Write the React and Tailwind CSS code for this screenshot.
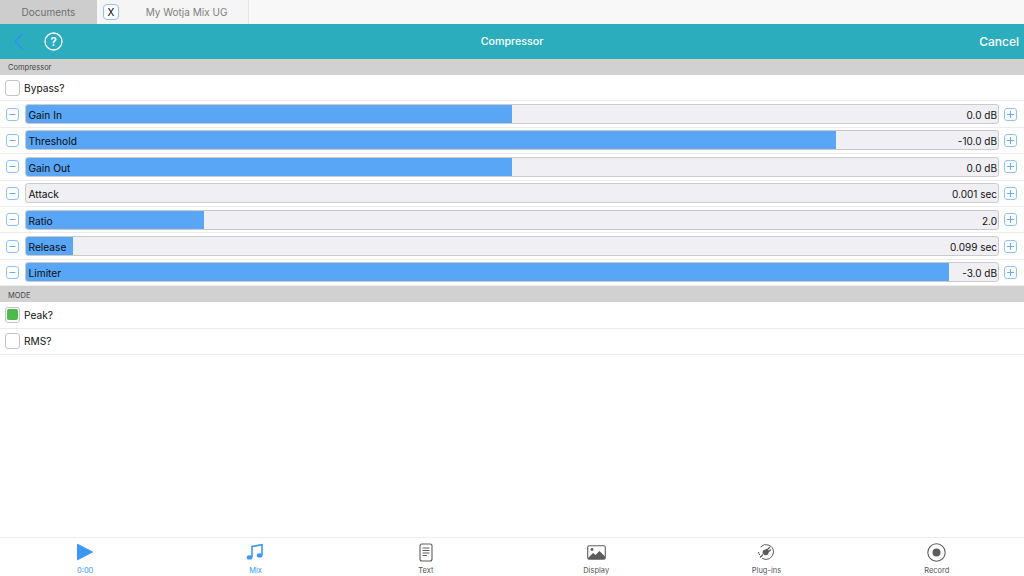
import React from "react";

function Check({ label, on }) {
  return (
    <div className="flex h-[26.4px] items-center border-b border-[#ececec] pl-[5px]">
      <div className="flex h-[16px] w-[15px] items-center justify-center rounded-[3px] border-[1.5px] border-[#c4c4c4] bg-white">
        {on && <div className="h-[11px] w-[11px] rounded-[2px] bg-[#4cbb4c]" />}
      </div>
      <span className="ml-[4px] pt-[1.5px] text-[10.2px] text-[#111]">{label}</span>
    </div>
  );
}

function Step({ plus }) {
  return (
    <div className="flex h-[13px] w-[13px] shrink-0 items-center justify-center rounded-[3px] border-[1.5px] border-[#8cc4f9] bg-white">
      <svg width="9" height="9" viewBox="0 0 9 9">
        <path d={plus ? "M1 4.5H8M4.5 1V8" : "M1.5 4.5H7.5"} stroke="#6aaef0" strokeWidth="1" fill="none" />
      </svg>
    </div>
  );
}

function Slider({ label, value, fill }) {
  return (
    <div className="flex h-[26.4px] items-center border-b border-[#ececec] pl-[6px] pr-[7px]">
      <Step />
      <div className="relative ml-[6px] mr-[5px] h-[20px] flex-1 overflow-hidden rounded-[3px] border border-[#cbcbce] bg-[#efeff4]">
        <div className="h-full bg-[#58a6f5]" style={{ width: fill }} />
        <span className="absolute left-[2.5px] top-[3px] text-[10.2px] leading-[14px] text-[#0a0a0a]">{label}</span>
        <span className="absolute right-[1px] top-[3px] text-[10px] leading-[14px] text-[#111]">{value}</span>
      </div>
      <Step plus />
    </div>
  );
}

function Section({ children }) {
  return (
    <div className="flex h-[16px] items-center bg-[#d1d1d1] pl-[8px] pt-[2px] text-[7.5px] text-[#444]">{children}</div>
  );
}

function TabItem({ icon, label, blue }) {
  return (
    <div className="flex flex-1 flex-col items-center">
      <div className="flex h-[24px] items-center justify-center">{icon}</div>
      <span className={`mt-[2px] text-[7.5px] leading-[10px] ${blue ? "text-[#3b97f3]" : "text-[#555]"}`}>{label}</span>
    </div>
  );
}

const G = "#5c5c5c";

const rows = [
  ["Gain In", "0.0 dB", "50%"],
  ["Threshold", "-10.0 dB", "83.3%"],
  ["Gain Out", "0.0 dB", "50%"],
  ["Attack", "0.001 sec", "0%"],
  ["Ratio", "2.0", "18.3%"],
  ["Release", "0.099 sec", "4.8%"],
  ["Limiter", "-3.0 dB", "95%"],
];

export default function App() {
  return (
    <div className="flex h-[576px] w-[1024px] flex-col overflow-hidden bg-white font-['Inter',sans-serif]">
      <div className="flex h-[24px] shrink-0 bg-[#f8f8f8]">
        <div className="flex w-[97px] items-center justify-center bg-[#cdcdcd] pt-[1px] text-[10px] text-[#6f6f6f]">Documents</div>
        <div className="ml-[2px] flex w-[150px] items-center border-r border-[#e6e6e6] bg-[#f5f5f5] pl-[4px]">
          <div className="flex h-[16px] w-[16px] items-center justify-center rounded-[4px] border-[1.5px] border-[#8cc4f9] bg-white text-[10px] text-black">X</div>
          <span className="flex-1 pl-[6px] pt-[1px] text-center text-[10px] text-[#808080]">My Wotja Mix UG</span>
        </div>
      </div>
      <div className="relative flex h-[35px] shrink-0 items-center justify-center bg-[#2badbd]">
        <div className="absolute left-[13px] top-[9px]">
          <svg width="11" height="17" viewBox="0 0 11 17">
            <path d="M9.5 1L2 8.5L9.5 16" stroke="#2f8ff5" strokeWidth="1.5" fill="none" />
          </svg>
        </div>
        <div className="absolute left-[44px] top-[8px]">
          <svg width="19" height="19" viewBox="0 0 19 19">
            <circle cx="9.5" cy="9.5" r="8.5" stroke="white" strokeWidth="1.3" fill="none" />
            <text x="9.5" y="13.5" textAnchor="middle" fontSize="11.5" fontWeight="600" fill="white" fontFamily="Inter">?</text>
          </svg>
        </div>
        <span className="pt-[2px] text-[10.7px] font-medium text-white">Compressor</span>
        <span className="absolute right-[5px] top-[10px] text-[12px] font-medium leading-[16px] text-white">Cancel</span>
      </div>
      <Section>Compressor</Section>
      <Check label="Bypass?" />
      {rows.map((r) => (
        <Slider key={r[0]} label={r[0]} value={r[1]} fill={r[2]} />
      ))}
      <Section>MODE</Section>
      <Check label="Peak?" on />
      <Check label="RMS?" />
      <div className="flex-1" />
      <div className="flex h-[39px] shrink-0 border-t border-[#ececec] pr-[2px] pt-[2px]">
        <TabItem
          blue
          label="0:00"
          icon={
            <svg width="18" height="18" viewBox="0 0 18 18">
              <path d="M1.5 1.2L16.5 9L1.5 16.8Z" fill="#3b97f3" stroke="#3b97f3" strokeWidth="1" strokeLinejoin="round" />
            </svg>
          }
        />
        <TabItem
          blue
          label="Mix"
          icon={
            <svg width="18" height="18" viewBox="0 0 18 18">
              <path d="M6 14V3.5L16 1.8V12" stroke="#3b97f3" strokeWidth="1.6" fill="none" />
              <ellipse cx="3.6" cy="14.4" rx="2.8" ry="2.2" fill="#3b97f3" />
              <ellipse cx="13.6" cy="12.4" rx="2.8" ry="2.2" fill="#3b97f3" />
            </svg>
          }
        />
        <TabItem
          label="Text"
          icon={
            <svg width="14" height="19" viewBox="0 0 14 19">
              <rect x="1" y="1" width="12" height="17" rx="2" stroke={G} strokeWidth="1.1" fill="none" />
              <path d="M3.5 5H10.5M3.5 7.5H10.5M3.5 10H10.5M3.5 12.5H8" stroke={G} strokeWidth="1" />
            </svg>
          }
        />
        <TabItem
          label="Display"
          icon={
            <svg width="19" height="15" viewBox="0 0 19 15">
              <rect x="0.7" y="0.7" width="17.6" height="13.6" rx="1.5" stroke={G} strokeWidth="1.1" fill="none" />
              <circle cx="5" cy="4.5" r="1.4" fill={G} />
              <path d="M1 13L6 8L8.5 10L12.5 6L18 11.5V14H1Z" fill={G} />
            </svg>
          }
        />
        <TabItem
          label="Plug-ins"
          icon={
            <svg width="18" height="18" viewBox="0 0 18 18">
              <path d="M3.5 4A7.5 7.5 0 0 1 16.5 9A7.5 7.5 0 0 1 5 15.3" stroke={G} strokeWidth="1" fill="none" />
              <path d="M2.8 12A7.5 7.5 0 0 1 1.5 9" stroke={G} strokeWidth="1" fill="none" />
              <path d="M6 7.5L10 5.8L12.3 8.2L10.5 12L7.5 12.2L5.5 10Z" fill={G} />
              <path d="M10 7L13 4M11.2 9L14 6.5M6 11.5L3 14.5" stroke={G} strokeWidth="1.2" />
            </svg>
          }
        />
        <TabItem
          label="Record"
          icon={
            <svg width="19" height="19" viewBox="0 0 19 19">
              <circle cx="9.5" cy="9.5" r="8.7" stroke={G} strokeWidth="1.1" fill="none" />
              <circle cx="9.5" cy="9.5" r="4" fill={G} />
            </svg>
          }
        />
      </div>
    </div>
  );
}
